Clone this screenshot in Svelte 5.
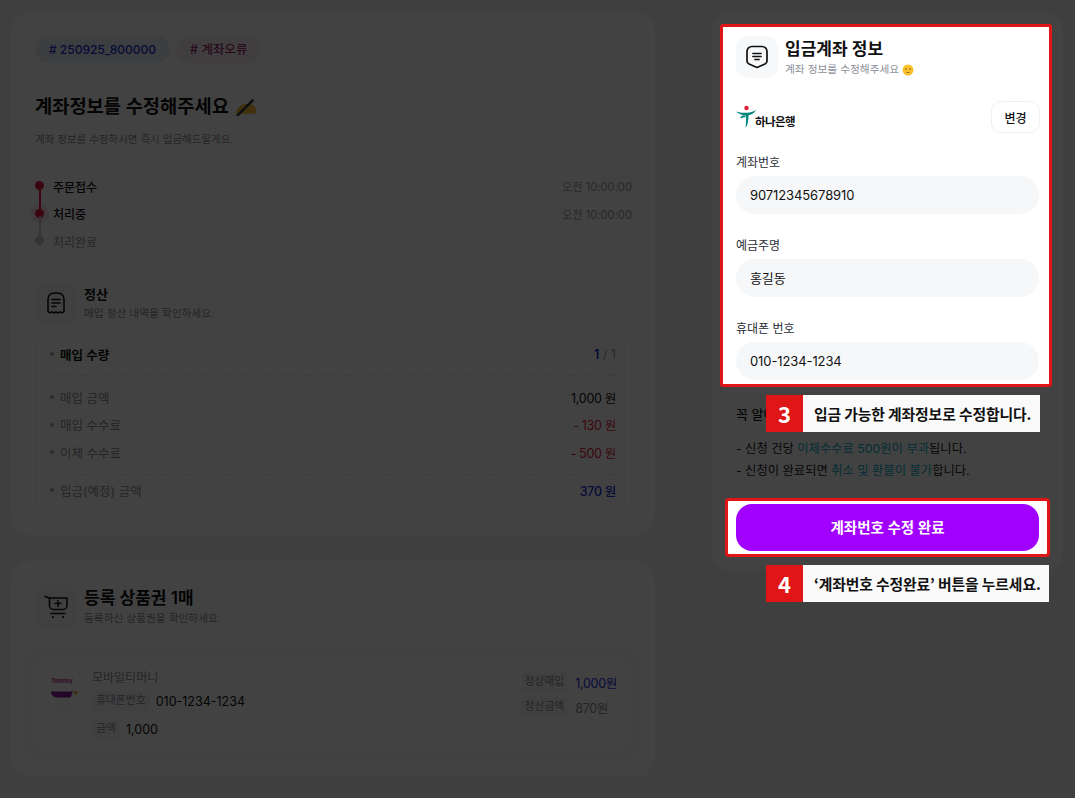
<script>
  const steps = [
    { label: '주문접수', time: '오전 10:00:00', state: 'done' },
    { label: '처리중', time: '오전 10:00:00', state: 'now' },
    { label: '처리완료', time: '', state: 'todo' }
  ];
  const fields = [
    { label: '계좌번호', value: '90712345678910' },
    { label: '예금주명', value: '홍길동' },
    { label: '휴대폰 번호', value: '010-1234-1234' }
  ];
  const fees = [
    { label: '매입 금액', value: '1,000 원', cls: 'black' },
    { label: '매입 수수료', value: '- 130 원', cls: 'red' },
    { label: '이체 수수료', value: '- 500 원', cls: 'red' }
  ];
</script>

<div class="page">
  <div class="left">
    <section class="card first">
      <div class="tags">
        <span class="tag blue"># 250925_800000</span>
        <span class="tag pink"># 계좌오류</span>
      </div>
      <h1>계좌정보를 수정해주세요
        <svg class="pen" width="23" height="21" viewBox="0 0 26 22">
          <path d="M2 18c1-7 8-12 15-11 5 0 8 4 8 8 0 2-1 3-3 3H6z" fill="#f5b92c" />
          <path d="M2 20 21 1l2 2L5 21z" fill="#33394a" />
        </svg>
      </h1>
      <p class="lead">계좌 정보를 수정하시면 즉시 입금해드릴게요.</p>

      <ul class="timeline">
        {#each steps as s, i}
          <li class="step {s.state}">
            <span class="dot"></span>
            {#if i < steps.length - 1}<span class="line"></span>{/if}
            <span class="step-label">{s.label}</span>
            <span class="time">{s.time}</span>
          </li>
        {/each}
      </ul>

      <div class="head settle-head">
        <span class="ico">
          <svg width="20" height="22" viewBox="0 0 20 22" fill="none" stroke="#111" stroke-width="1.6" stroke-linecap="round" stroke-linejoin="round">
            <path d="M2 19.500V7a6 6 0 0 1 6-6h4a6 6 0 0 1 6 6v12.500c-1.500 1.500-3 1.500-4 .3-1 1.300-3 1.300-4 0-1 1.300-3 1.300-4 0-1 1.200-2.500 1.200-4-.3z" />
            <path d="M6 7.500h8M6 11h8M6 14.500h4" />
          </svg>
        </span>
        <div>
          <h2>정산</h2>
          <p>매입 정산 내역을 확인하세요.</p>
        </div>
      </div>

      <div class="settle">
        <div class="row">
          <span class="name strong">매입 수량</span>
          <span class="count"><b>1</b> / 1</span>
        </div>
        <div class="dash"></div>
        <div class="fees">
          {#each fees as f}
            <div class="row">
              <span class="name">{f.label}</span>
              <span class="amt {f.cls}">{f.value}</span>
            </div>
          {/each}
        </div>
        <div class="dash"></div>
        <div class="row">
          <span class="name">입금(예정) 금액</span>
          <span class="amt bluev">370 원</span>
        </div>
      </div>
    </section>

    <section class="card second">
      <div class="head">
        <span class="ico">
          <svg width="24" height="23" viewBox="0 0 24 23" fill="none" stroke="#111" stroke-width="1.500" stroke-linecap="round" stroke-linejoin="round">
            <path d="M1 1.500 5.500 3" />
            <path d="M5.500 3H23v7.500a4 4 0 0 1-4 4H9.500a4 4 0 0 1-4-4z" />
            <path d="M14 5.500v6M11 8.500h6" />
            <path d="M7 18.500h14" />
            <path d="M9 22v.2M19 22v.2" stroke-width="2" />
          </svg>
        </span>
        <div>
          <h2 class="big">등록 상품권 1매</h2>
          <p>등록하신 상품권을 확인하세요.</p>
        </div>
      </div>
      <div class="item-wrap">
        <div class="item">
          <div class="logo">
            <svg width="30" height="26" viewBox="0 0 30 26">
              <text x="13" y="7" text-anchor="middle" font-size="5.500" font-weight="700" fill="#c0298a" font-family="Inter, sans-serif">Tmoney</text>
              <path d="M2 15.500h22l-2.500 6H9c-4 0-7-2-7-6z" fill="#8a1a9e" />
              <path d="M24.500 15.500h4.500l-2.500 4z" fill="#f5a020" />
            </svg>
          </div>
          <div class="item-main">
            <div class="item-name">모바일티머니</div>
            <div class="kv"><span class="chip">휴대폰번호</span><span class="val">010-1234-1234</span></div>
            <div class="kv"><span class="chip">금액</span><span class="val">1,000</span></div>
          </div>
          <div class="item-side">
            <span class="chip">정상매입</span><span class="val bluev">1,000원</span>
            <span class="chip">정산금액</span><span class="val grayv">870원</span>
          </div>
        </div>
      </div>
    </section>
  </div>

  <aside class="card right">
    <div class="hl form">
      <div class="head">
        <span class="ico">
          <svg width="24" height="24" viewBox="0 0 24 24" fill="none" stroke="#111" stroke-width="1.700" stroke-linecap="round" stroke-linejoin="round">
            <path d="M7 1.500h10a5 5 0 0 1 5 5v9.500c0 1.500-.8 2.500-2 3l-8 3.500L4 19c-1.200-.5-2-1.500-2-3V6.500a5 5 0 0 1 5-5z" />
            <path d="M8 8.500h8M8 11.500h8M10 14.500h4" />
          </svg>
        </span>
        <div>
          <h2 class="big">입금계좌 정보</h2>
          <p class="sub">계좌 정보를 수정해주세요
            <svg width="12" height="12" viewBox="0 0 12 12"><circle cx="6" cy="6" r="5.500" fill="#fbc02d" /><circle cx="4" cy="5" r=".8" fill="#7a5a10" /><circle cx="8" cy="5" r=".8" fill="#7a5a10" /><path d="M4.500 8.500h3" stroke="#7a5a10" stroke-width=".8" /></svg>
          </p>
        </div>
      </div>

      <div class="bank">
        <div class="bank-logo">
          <svg width="20" height="24" viewBox="0 0 20 24" fill="none">
            <circle cx="10.500" cy="3" r="2.200" fill="#e0203a" />
            <path d="M0 6.500c5 2 15 2 20-1.500-2 3.500-5 5-7.500 5.200C12.500 15 12 20 9.500 23c.5-5 1-9 .3-12.800C6 10 2 9 0 6.500z" fill="#00857a" />
            <path d="M5 13c1-1.500 3-2 4.500-1.500" stroke="#00857a" stroke-width="1.800" />
          </svg>
          <span class="bank-name">하나은행</span>
        </div>
        <button class="change">변경</button>
      </div>

      <div class="fields">
        {#each fields as f}
          <div class="field">
            <span class="f-label">{f.label}</span>
            <div class="input">{f.value}</div>
          </div>
        {/each}
      </div>
    </div>

    <div class="notes">
      <h3>꼭 알아두세요!</h3>
      <p>- 신청 건당 <em>이체수수료 500원이 부과</em>됩니다.</p>
      <p>- 신청이 완료되면 <em>취소 및 환불이 불가</em>합니다.</p>
    </div>

    <div class="hl cta">
      <button class="submit">계좌번호 수정 완료</button>
    </div>

    <div class="callout c3"><span class="num">3</span><span class="msg">입금 가능한 계좌정보로 수정합니다.</span></div>
    <div class="callout c4"><span class="num">4</span><span class="msg">‘계좌번호 수정완료’ 버튼을 누르세요.</span></div>
  </aside>
</div>
<div class="overlay"></div>

<style>
  :global(body) {
    margin: 0;
    background: #f3f4f6;
    font-family: Inter, "Noto Sans CJK KR", sans-serif;
    color: #111;
  }
  .page {
    display: flex;
    gap: 57px;
    align-items: flex-start;
    padding: 12px 12px 0 11px;
    height: 786px;
    overflow: hidden;
  }
  .overlay {
    position: fixed;
    inset: 0;
    background: rgba(0, 0, 0, 0.74);
    z-index: 1;
  }
  .left {
    width: 644px;
    flex: none;
    display: flex;
    flex-direction: column;
    gap: 26px;
  }
  .card {
    background: #fff;
    border-radius: 20px;
    box-sizing: border-box;
  }
  .first {
    padding: 24px 23px 22px 24px;
    height: 523px;
  }
  .tags {
    display: flex;
    gap: 6px;
  }
  .tag {
    height: 27px;
    line-height: 27px;
    padding: 0 14px;
    border-radius: 14px;
    font-size: 12px;
    font-weight: 500;
  }
  .tag.blue { background: #e9eff8; color: #1a2bd8; }
  .tag.pink { background: #f8eef2; color: #a02a70; font-size: 12.500px; }
  h1 {
    margin: 30px 0 0;
    font-size: 18.700px;
    line-height: 28px;
    font-weight: 600;
    display: flex;
    align-items: center;
    gap: 5px;
  }
  .lead {
    margin: 11px 0 0;
    font-size: 10.500px;
    line-height: 16px;
    color: #8b8f98;
  }
  .timeline {
    list-style: none;
    margin: 28px 0 0;
    padding: 0;
    display: flex;
    flex-direction: column;
    gap: 7.500px;
  }
  .step {
    position: relative;
    height: 20px;
    display: flex;
    align-items: center;
    font-size: 12px;
    font-weight: 500;
    padding-left: 18px;
  }
  .step-label { flex: 1; }
  .dot {
    position: absolute;
    left: 0;
    top: 5px;
    width: 9px;
    height: 9px;
    border-radius: 50%;
    background: #e5183c;
  }
  .line {
    position: absolute;
    left: 3.500px;
    top: 12px;
    width: 2px;
    height: 22px;
    background: #e5183c;
  }
  .step.now .line { background: #c4c6cc; }
  .step.now .dot { box-shadow: 0 0 0 5px rgba(229, 24, 60, 0.12); }
  .step.todo .dot { background: #c4c6cc; }
  .step.todo { color: #a6a9b0; }
  .time {
    font-size: 11.200px;
    color: #9a9da5;
    font-weight: 400;
  }
  .head {
    display: flex;
    gap: 7px;
    align-items: center;
  }
  .settle-head { margin-top: 31px; }
  .ico {
    width: 42px;
    height: 42px;
    flex: none;
    border-radius: 12px;
    background: #f6f8fa;
    display: flex;
    align-items: center;
    justify-content: center;
  }
  .head h2 {
    margin: -1px 0 0;
    font-size: 13px;
    line-height: 20px;
    font-weight: 600;
  }
  .head h2.big {
    margin: 0;
    font-size: 17px;
    line-height: 24px;
  }
  .head p {
    margin: 3px 0 0;
    font-size: 10.700px;
    line-height: 14px;
    color: #8b8f98;
  }
  .head h2.big + p { margin-top: 2px; }
  .settle {
    margin-top: 8px;
    border: 1px solid #f0f1f4;
    border-radius: 12px;
    padding: 11px 15px 0 14px;
    height: 182px;
    box-sizing: border-box;
  }
  .row {
    display: flex;
    justify-content: space-between;
    align-items: center;
    height: 20px;
    font-size: 12.500px;
  }
  .name {
    display: flex;
    align-items: center;
    gap: 6px;
    color: #8b8f98;
  }
  .name::before {
    content: "";
    width: 4px;
    height: 4px;
    border-radius: 50%;
    background: #a9acb3;
  }
  .name.strong {
    color: #111;
    font-weight: 600;
  }
  .amt { letter-spacing: -0.3px; }
  .count { color: #9a9da5; }
  .count b { color: #1a2bd8; font-weight: 600; }
  .dash {
    border-top: 1px dashed #e8e9ec;
    margin: 11px 0 11px;
  }
  .fees {
    display: flex;
    flex-direction: column;
    gap: 7.500px;
  }
  .fees + .dash { margin: 12px 0 5px; }
  .black { color: #111; }
  .red { color: #e5183c; }
  .bluev { color: #1a2bd8; font-weight: 500; }
  .grayv { color: #8b8f98; }
  .second {
    height: 216px;
    padding: 24px 16px 0 16px;
  }
  .second .head { padding-left: 8px; }
  .item-wrap {
    margin-top: 21px;
    background: #fafbfc;
    border-radius: 14px;
    padding: 9px 7px;
    height: 112px;
    box-sizing: border-box;
  }
  .item {
    background: #fff;
    border-radius: 12px;
    height: 100%;
    box-sizing: border-box;
    padding: 12px 15px 0 12px;
    display: flex;
    gap: 10px;
  }
  .logo {
    width: 36px;
    height: 36px;
    border-radius: 10px;
    margin-top: 2px;
    background: #fff;
    box-shadow: 0 1px 6px rgba(0, 0, 0, 0.06);
    display: flex;
    align-items: center;
    justify-content: center;
    flex: none;
  }
  .item-main { flex: 1; }
  .item-name {
    font-size: 12px;
    line-height: 18px;
    color: #8b8f98;
  }
  .kv {
    display: flex;
    align-items: center;
    gap: 6px;
    height: 20px;
    margin-top: 8px;
  }
  .item-main .kv:nth-child(2) { margin-top: 4px; }
  .chip {
    height: 20px;
    line-height: 20px;
    padding: 0 4px;
    border-radius: 5px;
    background: #f6f7f9;
    font-size: 10.800px;
    color: #8b8f98;
  }
  .val {
    font-size: 12.500px;
    font-weight: 400;
  }
  .item-side {
    display: grid;
    grid-template-columns: auto auto;
    align-content: start;
    align-items: center;
    column-gap: 7px;
    row-gap: 5px;
    margin-top: 3px;
    height: max-content;
  }
  .item-side .val { letter-spacing: -0.3px; }
  .right {
    width: 351px;
    flex: none;
    height: 559px;
    padding: 12px 11px 0 8px;
    position: relative;
  }
  .hl {
    position: relative;
    z-index: 2;
    background: #fff;
    border: 3px solid #e01515;
    border-radius: 3px;
    box-sizing: border-box;
  }
  .form {
    width: 332px;
    height: 363px;
    padding: 9px 10px 0 13px;
  }
  .sub {
    display: flex;
    align-items: center;
    gap: 3px;
  }
  .bank {
    display: flex;
    justify-content: space-between;
    align-items: center;
    margin: 23px -1px 0 0;
  }
  .bank-logo {
    display: flex;
    align-items: flex-end;
  }
  .bank-name {
    font-size: 11.500px;
    font-weight: 600;
    letter-spacing: -0.6px;
    margin-left: -1px;
  }
  .change {
    width: 49px;
    height: 32px;
    background: #fff;
    border: 1px solid #eff0f2;
    border-radius: 10px;
    font: 500 12px Inter, "Noto Sans CJK KR", sans-serif;
    color: #111;
    padding: 0;
  }
  .fields {
    display: flex;
    flex-direction: column;
    gap: 24px;
    margin-top: 22px;
  }
  .field {
    display: flex;
    flex-direction: column;
    gap: 6px;
  }
  .f-label {
    font-size: 12px;
    line-height: 15px;
    color: #2b2e35;
  }
  .input {
    height: 38px;
    line-height: 38px;
    border-radius: 19px;
    background: #f6f7f9;
    padding-left: 14px;
    font-size: 13px;
    letter-spacing: -0.1px;
    color: #111;
  }
  .notes {
    margin: 17px 0 0 16px;
  }
  .notes h3 {
    margin: 0 0 14px;
    font-size: 13px;
    line-height: 20px;
    font-weight: 500;
  }
  .notes p {
    margin: 0;
    font-size: 12.300px;
    line-height: 22px;
    color: #222;
  }
  .notes em {
    font-style: normal;
    color: #0fb0c8;
  }
  .cta {
    width: 325px;
    height: 59px;
    margin: 16px 0 0 5px;
    padding: 3px 8px;
    border-radius: 4px;
  }
  .submit {
    width: 100%;
    height: 47px;
    border: 0;
    border-radius: 16px;
    background: #a100ff;
    color: #fff;
    font: 600 14.500px Inter, "Noto Sans CJK KR", sans-serif;
    padding: 0 0 2px;
  }
  .callout {
    position: absolute;
    z-index: 3;
    left: 54px;
    height: 37px;
    background: #fafafa;
    display: flex;
    align-items: center;
    font-family: "Noto Sans CJK KR", sans-serif;
  }
  .c3 { top: 383px; width: 274px; }
  .c4 { top: 553px; width: 283px; }
  .num {
    width: 37px;
    height: 37px;
    background: #e01515;
    color: #fff;
    font-size: 22px;
    font-weight: 700;
    text-align: center;
    line-height: 37px;
  }
  .msg {
    margin-left: 11px;
    font-size: 14.800px;
    font-weight: 700;
    color: #111;
    white-space: nowrap;
    letter-spacing: -0.1px;
  }
</style>
